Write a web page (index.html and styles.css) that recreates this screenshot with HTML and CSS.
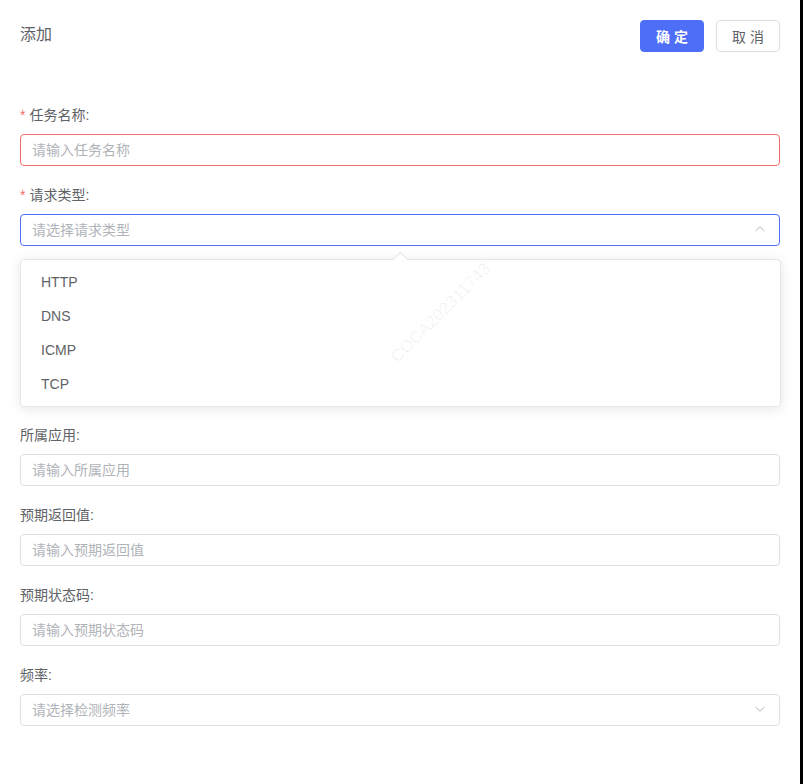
FILE: index.html
```html
<!DOCTYPE html>
<html lang="zh-CN">
<head>
<meta charset="utf-8">
<title>添加</title>
<link rel="stylesheet" href="styles.css">
</head>
<body>
<div class="page">
  <div class="header">
    <div class="title">添加</div>
    <div class="actions">
      <button class="btn btn-primary">确定</button>
      <button class="btn btn-default">取消</button>
    </div>
  </div>

  <form class="form">
    <div class="form-item">
      <label class="label"><span class="star">*</span>任务名称:</label>
      <div class="input is-error"><span class="placeholder">请输入任务名称</span></div>
    </div>

    <div class="form-item">
      <label class="label"><span class="star">*</span>请求类型:</label>
      <div class="select-wrap">
        <div class="input is-focus">
          <span class="placeholder">请选择请求类型</span>
          <svg class="chev" width="12" height="12" viewBox="0 0 12 12"><polyline points="1.5,8 6,3.8 10.5,8" fill="none" stroke="#b4b7bd" stroke-width="1"/></svg>
        </div>
        <div class="dropdown">
          <span class="arrow"></span>
          <ul class="options">
            <li class="option">HTTP</li>
            <li class="option">DNS</li>
            <li class="option">ICMP</li>
            <li class="option">TCP</li>
          </ul>
        </div>
      </div>
    </div>

    <div class="covered"></div>

    <div class="form-item">
      <label class="label">所属应用:</label>
      <div class="input"><span class="placeholder">请输入所属应用</span></div>
    </div>

    <div class="form-item">
      <label class="label">预期返回值:</label>
      <div class="input"><span class="placeholder">请输入预期返回值</span></div>
    </div>

    <div class="form-item">
      <label class="label">预期状态码:</label>
      <div class="input"><span class="placeholder">请输入预期状态码</span></div>
    </div>

    <div class="form-item">
      <label class="label">频率:</label>
      <div class="input">
        <span class="placeholder">请选择检测频率</span>
        <svg class="chev" width="12" height="12" viewBox="0 0 12 12"><polyline points="1.5,4 6,8.2 10.5,4" fill="none" stroke="#b4b7bd" stroke-width="1"/></svg>
      </div>
    </div>
  </form>
</div>
<div class="watermark">COCA202311743</div>
</body>
</html>
```

FILE: styles.css
```css
html {
  background: #000;
}

body {
  margin: 0;
  width: 800px;
  min-height: 784px;
  background: #fff;
  position: relative;
  font-family: "Liberation Sans", "Noto Sans CJK SC", Arial, sans-serif;
  font-size: 14px;
  color: #606266;
}

.page {
  padding: 20px;
}

.header {
  display: flex;
  justify-content: space-between;
  align-items: center;
  height: 32px;
}

.title {
  font-size: 16px;
  line-height: 20px;
  padding-bottom: 3px;
  color: #606266;
}

.actions {
  display: flex;
  gap: 12px;
}

.btn {
  width: 64px;
  height: 32px;
  border-radius: 4px;
  font-family: inherit;
  font-size: 14px;
  letter-spacing: 4px;
  padding: 0 0 1px 4px;
  cursor: pointer;
  display: flex;
  align-items: center;
  justify-content: center;
}

.btn-primary {
  background: #4f6ef7;
  border: 1px solid #4f6ef7;
  color: #fff;
  font-weight: 600;
}

.btn-default {
  background: #fff;
  border: 1px solid #dcdfe6;
  color: #606266;
}

.form {
  margin-top: 53px;
}

.form-item {
  margin-bottom: 19px;
}

.label {
  display: block;
  line-height: 20px;
  height: 20px;
  margin-bottom: 9px;
  color: #606266;
}

.star {
  color: #f56c6c;
  margin-right: 4px;
}

.input {
  height: 32px;
  box-sizing: border-box;
  border: 1px solid #dcdfe6;
  border-radius: 4px;
  padding: 0 11px 2px 11px;
  display: flex;
  align-items: center;
  justify-content: space-between;
  background: #fff;
}

.input.is-error {
  border-color: #f56c6c;
}

.input.is-focus {
  border-color: #4f6ef7;
}

.placeholder {
  color: #b0b3b8;
}

.chev {
  margin-right: 2px;
}

.select-wrap {
  position: relative;
}

.dropdown {
  position: absolute;
  left: 0;
  top: calc(100% + 13px);
  width: 761px;
  box-sizing: border-box;
  background: #fff;
  border: 1px solid #e4e7ed;
  border-radius: 4px;
  box-shadow: 0 2px 12px rgba(0, 0, 0, 0.1);
  z-index: 10;
}

.arrow {
  position: absolute;
  top: -6px;
  left: 374px;
  width: 10px;
  height: 10px;
  background: #fff;
  border-top: 1px solid #e4e7ed;
  border-left: 1px solid #e4e7ed;
  transform: rotate(45deg);
}

.options {
  list-style: none;
  margin: 0;
  padding: 5px 0;
  position: relative;
}

.option {
  height: 34px;
  line-height: 34px;
  padding: 0 20px;
  color: #606266;
}

.covered {
  height: 160px;
}

.watermark {
  position: absolute;
  left: 375px;
  top: 304px;
  width: 130px;
  text-align: center;
  font-size: 17px;
  color: rgba(0, 0, 0, 0.06);
  transform: rotate(-45deg);
  pointer-events: none;
  z-index: 20;
  white-space: nowrap;
}
```
